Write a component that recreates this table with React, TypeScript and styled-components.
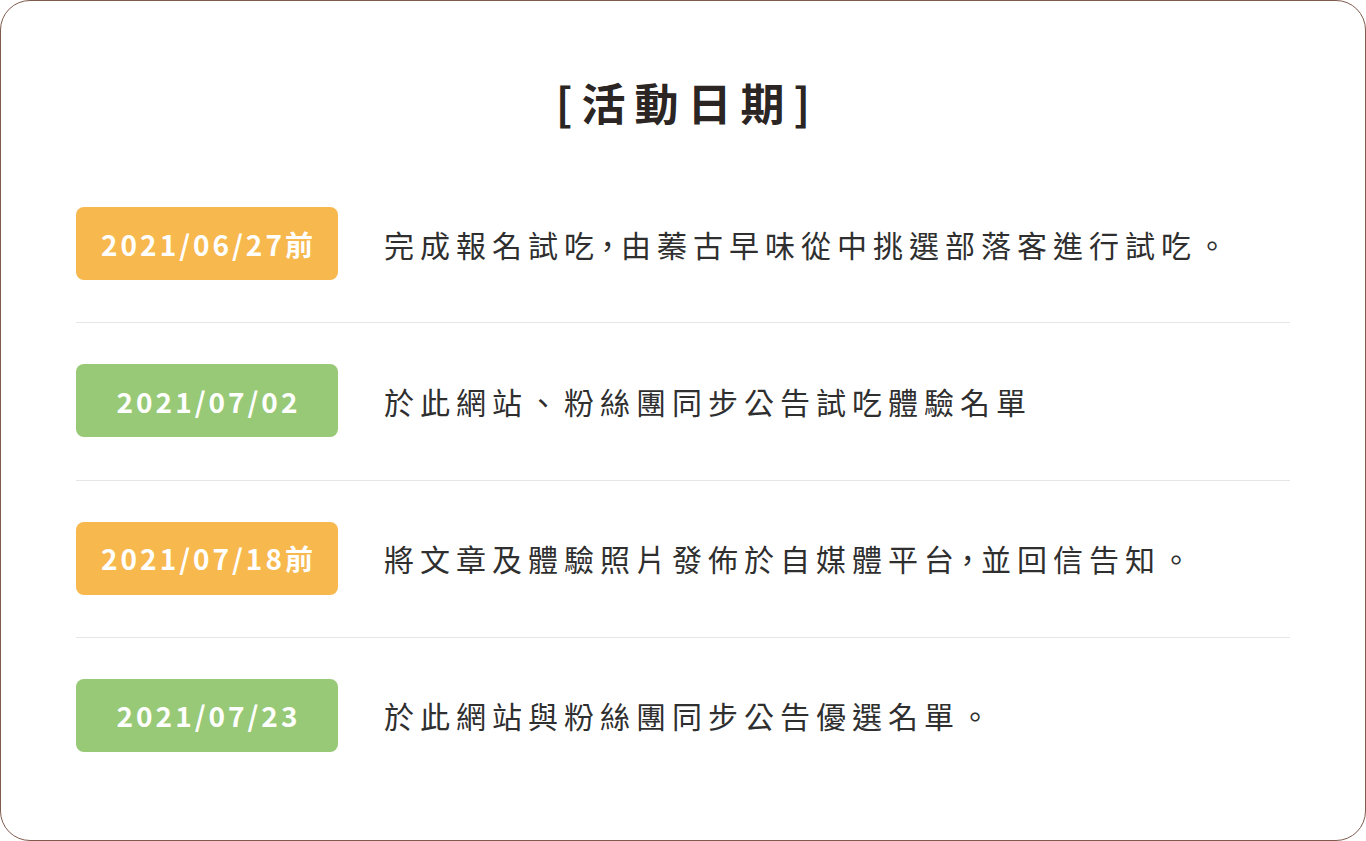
import React from "react";
import styled, { createGlobalStyle } from "styled-components";

const Global = createGlobalStyle`
  html, body { margin: 0; padding: 0; background: #ffffff; }
  body { font-family: "Noto Sans CJK TC", "Noto Sans", sans-serif; }
  * { box-sizing: border-box; }
`;

const Card = styled.div`
  width: 1366px;
  height: 841px;
  border: 1px solid #7f5b4e;
  border-radius: 30px;
  background: #ffffff;
  padding: 71px 75px 0 75px;
`;

const Title = styled.h2`
  margin: 0;
  text-align: center;
  font-family: "Noto Sans CJK TC", sans-serif;
  font-weight: 700;
  font-size: 44px;
  line-height: 60px;
  letter-spacing: 9px;
  color: #2b2523;
  padding-left: 9px;
`;

const List = styled.div`
  margin-top: 34px;
  display: flex;
  flex-direction: column;
`;

const Row = styled.div<{ $last?: boolean }>`
  display: flex;
  align-items: center;
  gap: 46px;
  padding: 41px 0 42.33px;
  border-bottom: ${(p) => (p.$last ? "none" : "1px solid #e6e6e6")};
`;

const Badge = styled.div<{ $tone: "orange" | "green" }>`
  flex: 0 0 262px;
  height: 73px;
  border-radius: 8px;
  background: ${(p) => (p.$tone === "orange" ? "#f7b84e" : "#98c977")};
  color: #ffffff;
  display: flex;
  align-items: center;
  justify-content: center;
  font-family: "Noto Sans CJK TC", sans-serif;
  font-weight: 700;
  font-size: 28px;
  letter-spacing: 3px;
  padding-left: 3px;
`;

const Desc = styled.p`
  margin: 0;
  font-family: "Noto Sans CJK TC", sans-serif;
  font-weight: 400;
  font-size: 30px;
  letter-spacing: 6px;
  color: #2f2f2f;
`;

const Comma = styled.span`
  font-feature-settings: "halt" 1;
`;

const renderText = (text: string) => {
  const parts = text.split("，");
  return parts.map((part, i) => (
    <React.Fragment key={i}>
      {part}
      {i < parts.length - 1 && <Comma>，</Comma>}
    </React.Fragment>
  ));
};

const items: { date: string; tone: "orange" | "green"; text: string }[] = [
  { date: "2021/06/27前", tone: "orange", text: "完成報名試吃，由蓁古早味從中挑選部落客進行試吃。" },
  { date: "2021/07/02", tone: "green", text: "於此網站、粉絲團同步公告試吃體驗名單" },
  { date: "2021/07/18前", tone: "orange", text: "將文章及體驗照片發佈於自媒體平台，並回信告知。" },
  { date: "2021/07/23", tone: "green", text: "於此網站與粉絲團同步公告優選名單。" },
];

export default function App() {
  return (
    <>
      <Global />
      <Card>
        <Title>[活動日期]</Title>
        <List>
          {items.map((it, i) => (
            <Row key={it.date} $last={i === items.length - 1}>
              <Badge $tone={it.tone}>{it.date}</Badge>
              <Desc>{renderText(it.text)}</Desc>
            </Row>
          ))}
        </List>
      </Card>
    </>
  );
}
